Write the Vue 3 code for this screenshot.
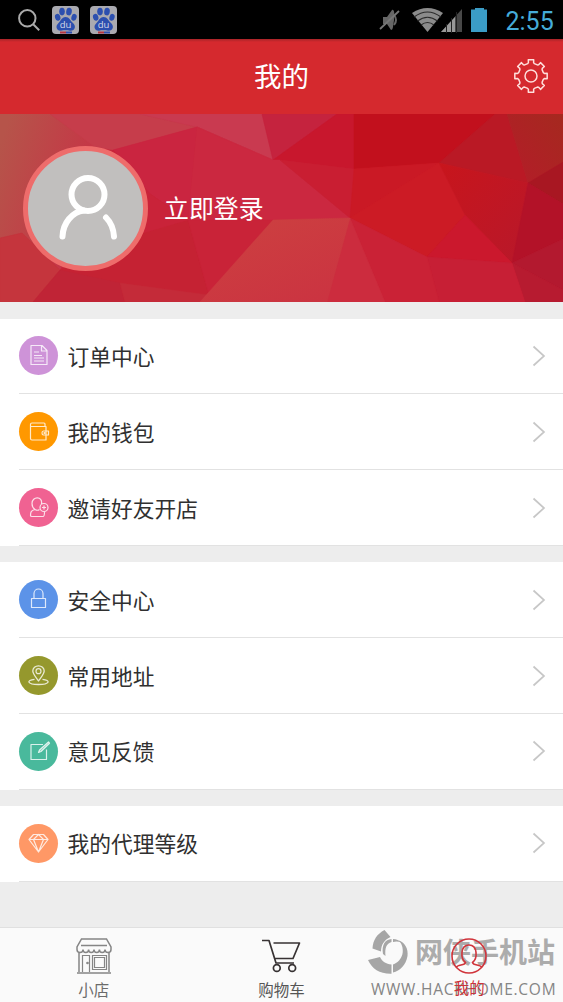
<script setup>
const groups = [
  [
    { icon: 'order', label: '订单中心', color: '#ce93d8' },
    { icon: 'wallet', label: '我的钱包', color: '#ff9800' },
    { icon: 'invite', label: '邀请好友开店', color: '#f06292' },
  ],
  [
    { icon: 'lock', label: '安全中心', color: '#5c93e8' },
    { icon: 'pin', label: '常用地址', color: '#95982d' },
    { icon: 'edit', label: '意见反馈', color: '#49b99c' },
  ],
  [{ icon: 'gem', label: '我的代理等级', color: '#ff9866' }],
]

// Eight-toothed gear outline around the origin
const gear = (() => {
  const pts = []
  const at = (r, deg) => {
    const a = (deg * Math.PI) / 180
    pts.push(`${(r * Math.cos(a)).toFixed(2)} ${(r * Math.sin(a)).toFixed(2)}`)
  }
  for (let i = 0; i < 8; i++) {
    const c = i * 45
    at(12.8, c - 15)
    at(13.6, c - 11)
    at(16.4, c - 9.5)
    at(16.4, c + 9.5)
    at(13.6, c + 11)
    at(12.8, c + 15)
  }
  return 'M' + pts.join('L') + 'Z'
})()

const facets = [
  ['0,0 50,0 100,36 60,156 22,119 0,124', 'url(#olive)'],
  ['50,0 140,0 197,13 113,36 95,33', '#c63d4b'],
  ['140,0 262,0 273,46 197,13', '#c93a50'],
  ['197,13 273,46 240,35', '#cc2f44'],
  ['113,36 197,13 188,106 150,80', '#ca2540'],
  ['113,36 150,80 188,106 140,120 100,100', '#c92339'],
  ['188,106 209,181 120,169 60,156 140,120', '#c52233'],
  ['150,80 188,106 140,120', '#c92339'],
  ['197,13 273,46 273,106 188,106', '#cb2840'],
  ['188,106 273,106 209,181', '#c92338'],
  ['0,124 22,119 60,156 33,188 0,188', '#c5353d'],
  ['60,156 120,169 125,188 33,188', '#c02436'],
  ['120,169 209,181 200,188 125,188', '#c42b39'],
  ['262,0 337,0 280,41 273,46', '#c5233e'],
  ['337,0 354,0 354,55 280,46 273,46 280,41', '#c8172d'],
  ['354,0 495,0 439,49 354,55', '#c2101d'],
  ['495,0 507,0 528,69 439,49', '#ba1925'],
  ['507,0 563,0 563,48 528,69', 'url(#brown)'],
  ['273,46 280,46 350,104 273,106', '#cb2840'],
  ['280,46 354,55 350,104', '#c91e32'],
  ['354,55 439,49 350,104', '#ca1925'],
  ['350,104 439,49 465,101 427,143', '#cc1b25'],
  ['439,49 528,69 512,149 465,101', 'url(#ruby)'],
  ['465,101 512,149 427,143', '#cb182d'],
  ['528,69 563,48 563,90', '#a81722'],
  ['528,69 563,90 563,125 512,149', '#b31228'],
  ['512,149 563,125 563,176', '#b3192f'],
  ['512,149 563,176 563,188 525,188', '#b71b30'],
  ['427,143 512,149 525,188 439,188', '#c71f35'],
  ['350,104 427,143 439,188 385,188', '#ca2236'],
  ['350,104 385,188 327,188', '#cc2c3e'],
  ['273,106 350,104 327,188 200,188', 'url(#coral)'],
]
</script>

<template>
  <div class="screen">
    <div class="status">
      <svg class="search" width="24" height="24" viewBox="0 0 24 24" fill="none" stroke="#aaa" stroke-width="2">
        <circle cx="10.3" cy="10.3" r="8.2" /><path d="M16.2 16.2l6 6" />
      </svg>
      <svg v-for="n in 2" :key="n" class="paw" width="27" height="28" viewBox="0 0 27 28">
        <rect width="27" height="28" rx="4" fill="#aaaab0" />
        <g fill="#2c4faf">
          <ellipse cx="5.7" cy="11.3" rx="2.7" ry="3.5" transform="rotate(-15 5.7 11.3)" />
          <ellipse cx="10" cy="5.6" rx="2.8" ry="3.8" />
          <ellipse cx="17" cy="5.6" rx="2.8" ry="3.8" transform="rotate(8 17 5.6)" />
          <ellipse cx="22" cy="11.3" rx="2.6" ry="3.5" transform="rotate(15 22 11.3)" />
          <path d="M13.5 11C9.5 11 9 15 6.3 17.3C3 20.2 4.5 25 9 24.7C12 24.2 15 24.2 18 24.7C23 25.2 24.5 20 21 17C18 14.6 17.5 11 13.5 11Z" />
        </g>
        <path d="M8 26.5h6" stroke="#b4353f" stroke-width="2" /><path d="M14 26.5h6" stroke="#2c4faf" stroke-width="2" />
        <text x="13.5" y="21.8" text-anchor="middle" class="du">du</text>
      </svg>
      <span class="spacer"></span>
      <svg class="signals" width="112" height="30" viewBox="0 0 112 30">
        <g fill="#666">
          <path d="M4 12h4l5-7c2-1 3 3 2 10s-1 10-3 10l-4-6H4z" />
          <path d="M15 10q4 5 0 10" fill="none" stroke="#666" stroke-width="2" />
        </g>
        <path d="M1 24L20 6" stroke="#777" stroke-width="1.800" />
        <path d="M33 8Q48.500-2 64 8L48.500 27Z" fill="#8b8b8b" />
        <g fill="none" stroke="#2a2a2a" stroke-width="1.200">
          <path d="M35 12Q48.500 2 62 12M38.500 16Q48.500 8.500 58.500 16M42 20Q48.500 15 55 20" />
        </g>
        <path d="M62 27L83 4V27Z" fill="#484848" />
        <path d="M62 27L76 12V27Z" fill="#999" />
        <path d="M67.500 19V28M72.500 13V28M77.500 7V28" stroke="#222" stroke-width="1" />
        <path d="M92 4.500h4V3h9v1.500h3V27H92Z" fill="#3b9cc6" />
      </svg>
      <span class="clock">2:55</span>
    </div>

    <header class="bar">
      <h1>我的</h1>
      <svg class="gear" width="36" height="36" viewBox="-18 -18 36 36" fill="none" stroke="#ffdfdc" stroke-width="1.500">
        <path :d="gear" stroke-linejoin="round" /><circle r="6" />
      </svg>
    </header>

    <section class="hero">
      <svg class="facets" width="563" height="188" viewBox="0 0 563 188">
        <defs>
          <linearGradient id="olive" x1="0" y1="0.2" x2="0.8" y2="0.6"><stop stop-color="#b6544a" /><stop offset="1" stop-color="#c63546" /></linearGradient>
          <linearGradient id="brown" x1="1" y1="0" x2="0" y2="1"><stop stop-color="#a5291f" /><stop offset="1" stop-color="#b51c29" /></linearGradient>
          <linearGradient id="ruby" x1="0" y1="0" x2="1" y2="1"><stop stop-color="#c8151c" /><stop offset="1" stop-color="#b8182a" /></linearGradient>
          <linearGradient id="coral" x1="0.2" y1="0" x2="0.9" y2="1"><stop stop-color="#cc4040" /><stop offset="1" stop-color="#cb3341" /></linearGradient>
        </defs>
        <rect width="563" height="188" fill="#c7263a" />
        <polygon v-for="(f, i) in facets" :key="i" :points="f[0]" :fill="f[1]" :stroke="f[1]" stroke-width="0.500" />
      </svg>
      <div class="avatar">
        <svg width="115" height="115" viewBox="0 0 115 115" fill="none" stroke="#fff" stroke-width="6" stroke-linecap="round">
          <circle cx="60" cy="43.500" r="16.500" /><path d="M34.500 85.500C35 72 44 61 56 59.500M78 66.500C82.500 71 85.500 78 86 85.500" />
        </svg>
      </div>
      <span class="login">立即登录</span>
    </section>

    <main>
      <ul v-for="(group, g) in groups" :key="g" class="group">
        <li v-for="item in group" :key="item.icon" class="row">
          <span class="badge" :style="{ background: item.color }">
            <svg width="39" height="39" viewBox="0 0 39 39" fill="none" stroke="#fff" stroke-opacity="0.800" stroke-width="1.200" stroke-linejoin="round">
              <template v-if="item.icon === 'order'">
                <path d="M12 9.500h11l5 5V28.500H12ZM22.500 9.500v5.500h5.500M15 16h5M15 19.500h8M15 22h10M15 25h10" />
              </template>
              <template v-else-if="item.icon === 'wallet'">
                <path d="M11.500 14.500V26.500q0 1.500 1.500 1.500h14V14.500H11.500V12.500q0-1.500 1.500-1.500H25q1 0 1 1v2.500M29.500 19h-5q-1.500 0-1.500 2t1.500 2h5Z" /><circle cx="25.500" cy="21" r="0.500" />
              </template>
              <template v-else-if="item.icon === 'invite'">
                <path d="M22.500 16C24 8 13 8 13 15.500C13 18 14.500 20.500 16 21.500C12 22.500 11.500 24 11.500 27.500Q11.500 28.500 13 28.500H24Q25.500 28.500 25.500 24M16 21.500q2.500 1.500 4.500 0" />
                <circle cx="25" cy="19.500" r="4" /><path d="M25 17.500v4M23 19.500h4" />
              </template>
              <template v-else-if="item.icon === 'lock'">
                <path d="M12.500 18.500h14v9h-14ZM15 18.500V13.500a4.500 4.500 0 0 1 9 0V18.500" />
              </template>
              <template v-else-if="item.icon === 'pin'">
                <path stroke-width="1.300" d="M19.500 25C17 21 13.800 18 13.800 15a5.700 5.200 0 0 1 11.400 0C25.200 18 22 21 19.500 25ZM15.500 23.300C7 24.300 8 28.500 19.500 28.500S32 24.300 23.500 23.300" /><circle cx="19.500" cy="15.200" r="2.500" />
              </template>
              <template v-else-if="item.icon === 'edit'">
                <path d="M24 12.500H12v15h15.500V17.500" /><path d="M19.500 20.500l1-2.500L29.500 10l1 1.200L22 19.500Z" fill="#fff" fill-opacity="0.300" />
              </template>
              <template v-else>
                <path d="M14.500 10.500h10l4.500 5L19.500 28 10 15.500ZM10 15.500H29M14.500 15.500L19.500 28L24.500 15.500M14.500 15.500L19.500 10.500L24.500 15.500" />
              </template>
            </svg>
          </span>
          <span class="label">{{ item.label }}</span>
          <svg class="chevron" width="16" height="24" viewBox="0 0 16 24" fill="none" stroke="#c7c7c7" stroke-width="1.700"><path d="M2.500 2.500L13 12L2.500 21.500" /></svg>
        </li>
      </ul>
    </main>

    <nav class="tabs">
      <div class="mark">
        <svg class="swirl" width="42" height="45" viewBox="0 0 42 45" fill="#a6a6a6">
          <path d="M16.500 0L22.500 7C16 10 13 15 13 21.500L4.500 18.500C5 10 9 4 16.500 0Z" />
          <path d="M0 30L12 27C14 31.500 18 34 23.500 34.500V43.700C12 44 4 39 0 30Z" />
          <path d="M25 34.500C35 31 38 19 31 10.500C37 12.500 40.500 19 39.500 26C38 35 32 41 25 42.500Z" />
          <path d="M15 24C13.500 15 17 9.500 23.500 9V12C18.500 13.500 16.500 18 17.500 26ZM25 9Q30 9 33.500 12.500Q29 11 25 12Z" />
        </svg>
        <span class="site">网侠手机站</span>
        <span class="url">WWW.HACKHOME.COM</span>
      </div>
      <div class="tab">
        <svg width="36" height="38" viewBox="0 0 36 38" fill="none" stroke="#858585" stroke-width="1.500">
          <path d="M5.500 2H30.500L35 10v2.500q0 3-3 3t-3-3q0 3-2.800 3t-2.800-3q0 3-2.700 3t-2.700-3q0 3-2.700 3t-2.700-3q0 3-2.800 3t-2.800-3q0 3-3 3t-3-3V10ZM5 8.500H31M3 15V35M33 15V35M1 36H35" />
          <path d="M6.500 35V18.500H13.500V35M16.500 18.500H30.500V32.500H16.500ZM18.500 20.500H28.500V30.500H18.500Z" stroke-width="1.200" /><circle cx="11.500" cy="26" r="0.600" />
        </svg>
        <span>小店</span>
      </div>
      <div class="tab dark">
        <svg width="40" height="38" viewBox="0 0 40 38" fill="none" stroke="#373233" stroke-width="1.700" stroke-linejoin="round">
          <path d="M1 3.500H8L15 26H33M12.500 6H38.500L32 21.500H13.500" /><circle cx="15.800" cy="31" r="3.400" /><circle cx="31.200" cy="31" r="3.400" />
        </svg>
        <span>购物车</span>
      </div>
      <div class="tab active">
        <svg width="36" height="38" viewBox="0 0 36 38" fill="none" stroke="#d0343b" stroke-width="1.600">
          <circle cx="18" cy="19" r="17" /><path d="M18 8C9 8 9.500 22 14.500 25.500C13.500 29 7 27 5 30.500M18 8C27 8 26.500 22 21.500 25.500C22.500 29 29 27 31 30.500" />
        </svg>
        <span>我的</span>
      </div>
    </nav>
  </div>
</template>

<style>
html, body { margin: 0; background: #ededed; }
</style>

<style scoped>
.screen {
  width: 563px; height: 1002px; overflow: hidden;
  display: flex; flex-direction: column;
  background: #ededed; color: #303030;
  font-family: "Noto Sans CJK SC", sans-serif;
}
svg { display: block; flex: none; }
.status { height: 39px; flex: none; display: flex; align-items: center; background: #000; box-sizing: border-box; padding: 0 10px 0 17px; }
.search { margin-right: 11px; }
.paw { margin-right: 10.500px; }
.du { font: 9.500px "Open Sans", sans-serif; fill: #d5d8e8; }
.spacer { flex: 1; }
.signals { margin: 0 15px 0 0; }
.clock { font: 25px/39px Roboto, sans-serif; color: #45acd8; width: 47.500px; white-space: nowrap; padding-top: 3px; }
.bar { height: 75px; flex: none; display: grid; grid-template-columns: 1fr auto 1fr; align-items: center; background: linear-gradient(#a82428, #d5292e 3px); }
.bar h1 { grid-column: 2; margin: -2px 0 0; font-size: 27.500px; font-weight: 400; line-height: 75px; color: #fff; }
.gear { justify-self: end; margin: -1px 14.500px 0 0; }
.hero { height: 188px; flex: none; display: grid; grid-template-columns: auto 1fr; align-items: center; }
.facets { grid-area: 1 / 1 / 2 / 3; }
.avatar { grid-area: 1 / 1; z-index: 1; margin-left: 23px; width: 115px; height: 115px; border: 5px solid #ee6c6b; border-radius: 50%; background: #c1bfbe; }
.login { grid-area: 1 / 2; z-index: 1; margin: -2px 0 0 16px; color: #fff; font-size: 24.900px; line-height: 30px; }
main { flex: 1; padding-top: 16.500px; display: flex; flex-direction: column; gap: 16px; }
.group { margin: 0; padding: 0 0 0 19px; list-style: none; background: #fff; }
.row { height: 75.900px; box-sizing: border-box; border-bottom: 1px solid #e2e2e2; display: flex; align-items: center; padding-right: 16.500px; }
.badge { width: 39px; height: 39px; border-radius: 50%; margin-right: 9.500px; }
.label { flex: 1; font-size: 21.750px; line-height: 30px; }
.tabs { height: 75px; flex: none; box-sizing: border-box; border-top: 1px solid #e0e0e0; background: #fafafa; display: grid; grid-template-columns: repeat(3, 1fr); position: relative; }
.tab { position: relative; display: flex; flex-direction: column; align-items: center; padding-top: 9px; font-size: 15.500px; line-height: 20px; color: #6b6b6b; }
.tab span { margin-top: 4px; }
.dark { color: #555; }
.active { color: #cc3238; }
.active span { margin-top: 2px; }
.mark { position: absolute; left: 368px; top: 2px; width: 195px; height: 70px; pointer-events: none; }
.swirl { position: absolute; left: 0; top: 0; }
.site { position: absolute; left: 47px; top: 5px; font-size: 28px; line-height: 32px; font-weight: 700; white-space: nowrap; color: #acacac; }
.url { position: absolute; left: 3px; top: 49px; font: 15.500px/20px "Open Sans", sans-serif; letter-spacing: 0.750px; white-space: nowrap; color: #858585; }
</style>
